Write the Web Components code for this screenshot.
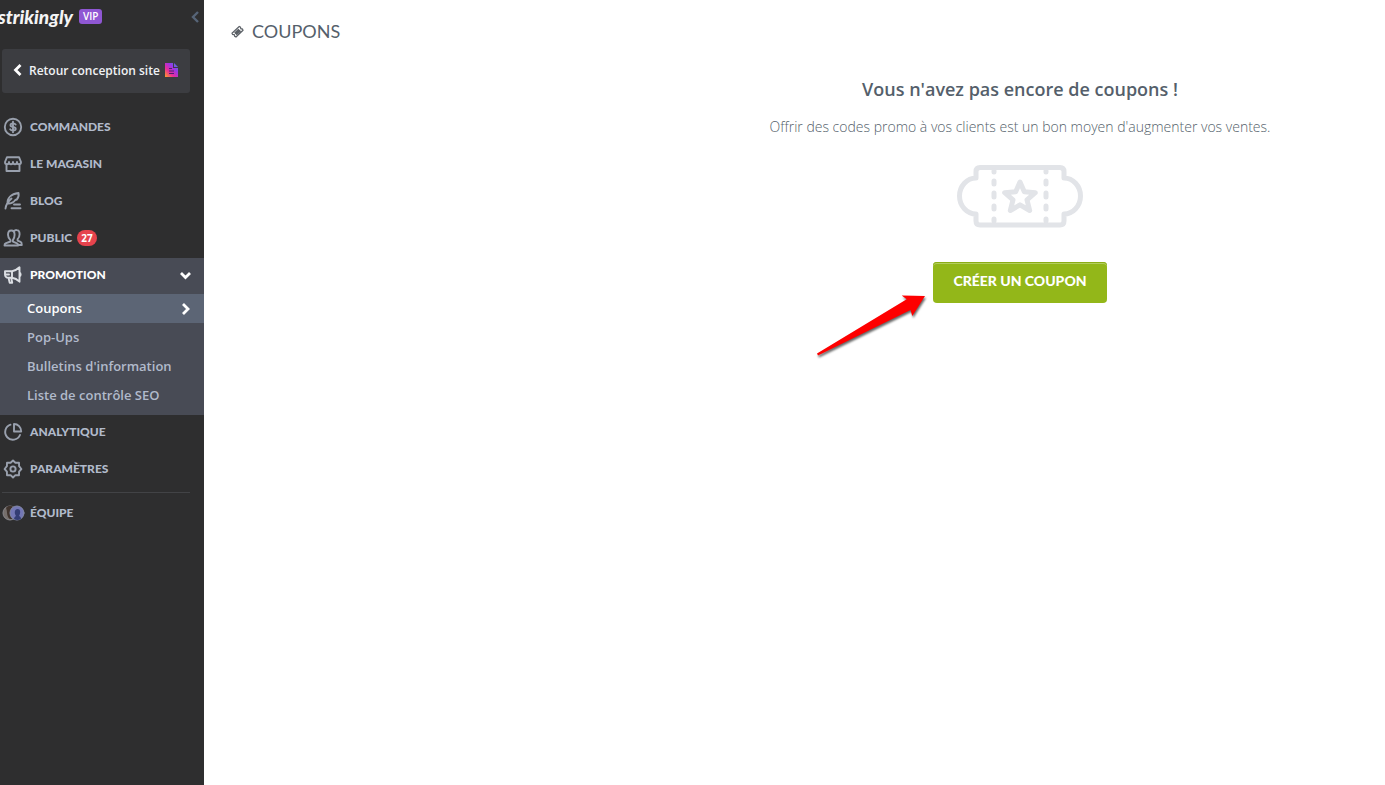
<!DOCTYPE html>
<html lang="fr">
<head>
<meta charset="utf-8">
<title>Coupons</title>
<style>
    body {
        margin: 0;
        background: #fff;
        font-family: "Open Sans", "Noto Sans", sans-serif;
        --title-font: Lato, "Open Sans", sans-serif;
        --menu-color: #b1bacb;
        --icon-color: #99a0ad;
        --text-color: #555f6b;
    }
</style>
</head>
<body>
<dashboard-layout>
    <side-bar slot="sidebar">
        <menu-item icon="orders">Commandes</menu-item>
        <menu-item icon="store">Le magasin</menu-item>
        <menu-item icon="blog">Blog</menu-item>
        <menu-item icon="audience" count="27">Public</menu-item>
        <menu-group icon="promotion" label="Promotion">
            <sub-item active>Coupons</sub-item>
            <sub-item>Pop-Ups</sub-item>
            <sub-item>Bulletins d'information</sub-item>
            <sub-item>Liste de contrôle SEO</sub-item>
        </menu-group>
        <menu-item icon="analytics">Analytique</menu-item>
        <menu-item icon="settings">Paramètres</menu-item>
        <menu-divider></menu-divider>
        <menu-item icon="team">Équipe</menu-item>
    </side-bar>
    <page-title>Coupons</page-title>
    <empty-state>
        <span slot="heading">Vous n'avez pas encore de coupons !</span>
        <span slot="text">Offrir des codes promo à vos clients est un bon moyen d'augmenter vos ventes.</span>
        <action-button slot="action">Créer un coupon</action-button>
    </empty-state>
</dashboard-layout>

<script>
const ICONS = {
    orders: `<circle cx="10" cy="10" r="8.2"/>
        <path d="M12.6 7.6c-.5-.8-1.400-1.200-2.600-1.200-1.500 0-2.500.7-2.500 1.800 0 2.500 5.200 1.100 5.200 3.600 0 1.100-1.100 1.800-2.700 1.800-1.300 0-2.300-.5-2.800-1.300M10 4.800v10.400"/>`,
    store: `<path d="M4 3.200h12l2 4.800c0 1.300-.9 2.300-2 2.300s-2-1-2-2.300c0 1.300-.9 2.300-2 2.300s-2-1-2-2.300c0 1.300-.9 2.300-2 2.300s-2-1-2-2.300c0 1.300-.9 2.300-2 2.300s-2-1-2-2.300zM3.500 10.500v6.500h13v-6.500"/>`,
    blog: `<path d="M2.500 17.500c.5-4 2.500-7 6-10M4.500 12.500C4 7 8 3 15.500 2c.6 3-.2 5-1.700 6.500l-1.500.5c-2 2.700-4.300 3.800-7.800 3.500M11 13.500h6M8.500 17.300h9"/>`,
    audience: `<path d="M7.500 12.200C5.800 10.800 5 8.900 5 6.800 5 4.200 6.200 2.500 8.300 2.500s3.300 1.700 3.300 4.300c0 2.100-.7 4-1.700 5.300v1.500l4.200 1.700c.8.300 1 1 1 2.200H1.500c0-1.300.2-1.900 1-2.200l5-1.800zM11 3.200c.7-.9 1.600-1.300 2.600-1.200 2 .1 3 1.800 3 4.200 0 2-.8 3.700-2 4.900v1.600l3 1.200c1 .4 1.200 1.300 1.200 3.100h-3.500"/>`,
    promotion: `<path d="M2 6.200h7c3-.4 5.500-2 7.500-3.900v14.400c-2-2-4.500-3.500-7.500-3.900H5.500C3.200 12.800 2 11.500 2 9.500zM9 6.200v6.600M2 9.500h4M5.500 12.800l1.200 4.900h2.500l-1-4.900M16.500 7.500c1.500.7 1.500 3.300 0 4"/>`,
    analytics: `<path d="M7.500 2.700A7.700 7.700 0 1 0 17 13M11 2v7.500h7.200C18.200 5.300 15 2 11 2z"/>`,
    settings: `<path d="M10 1.500l2.400 2.300 3.600-.1.100 3.500L18.400 10l-2.300 2.600-.1 3.600-3.600-.1L10 18.500l-2.400-2.400-3.600.1-.1-3.600L1.600 10l2.300-2.800.1-3.500 3.600.1z"/><circle cx="10" cy="10" r="2.600"/>`,
    team: `<circle cx="7" cy="10" r="7" fill="#766f6c" stroke="#88878c" stroke-width="1"/>
        <path d="M3 5c2-3 6-3 8 0v10c-3 2-5 1-6-1-1.500-3-.5-6-2-9z" fill="#40342e" stroke="none"/>
        <circle cx="14" cy="10" r="7" fill="#7377b5" stroke="#8389a6" stroke-width="1"/>
        <path d="M11 16c.5-2 1-2.500 2-3-2-3-1.500-7 1.500-7s3.500 3.500 1.500 7c1.500.5 2 1.500 2 3-2 1.300-5 1.300-7 0z" fill="#343d74" stroke="none"/>`
};

function icon(name) {
    return `<svg class="icon" viewBox="0 0 20 20" aria-hidden="true">${ICONS[name] || ''}</svg>`;
}

const ROW_STYLE = `
    a, button {
        display: flex;
        align-items: center;
        width: 100%;
        height: 36px;
        box-sizing: border-box;
        padding: 0 12px 2px 3px;
        border: 0;
        background: none;
        font: 900 12px/18px var(--title-font);
        color: var(--menu-color);
        text-transform: uppercase;
        text-decoration: none;
        text-align: left;
    }
    .icon {
        flex: none;
        width: 20px;
        height: 20px;
        margin-right: 7px;
        fill: none;
        stroke: var(--icon-color);
        stroke-width: 1.9;
        stroke-linejoin: round;
        stroke-linecap: round;
        overflow: visible;
    }
`;

class DashboardLayout extends HTMLElement {
    connectedCallback() {
        this.attachShadow({ mode: 'open' });
        this.shadowRoot.innerHTML = `
            <style>
                :host {
                    display: grid;
                    grid-template-columns: 204px 1fr;
                    min-height: 100vh;
                }
                main {
                    padding: 18px 0 0 27px;
                }
            </style>
            <slot name="sidebar"></slot>
            <main><slot></slot></main>
        `;
    }
}

class SideBar extends HTMLElement {
    connectedCallback() {
        this.attachShadow({ mode: 'open' });
        this.shadowRoot.innerHTML = `
            <style>
                :host {
                    display: block;
                    background: #2e2e2f;
                }
                header {
                    display: flex;
                    align-items: center;
                    height: 33px;
                    padding-right: 5px;
                }
                .logo {
                    margin-left: -2px;
                    color: #f4f4f5;
                    font: italic 900 19px/28px var(--title-font);
                    text-decoration: none;
                }
                .plan {
                    margin-left: 6px;
                    padding: 0 4px;
                    border-radius: 3px;
                    background: #8f57d3;
                    color: #fff;
                    font-size: 10px;
                    font-weight: 600;
                    line-height: 15px;
                }
                .collapse {
                    display: flex;
                    margin-left: auto;
                    padding: 0;
                    border: 0;
                    background: none;
                }
                .back {
                    display: flex;
                    align-items: center;
                    height: 44px;
                    box-sizing: border-box;
                    margin: 16px 14px 17px 2px;
                    padding: 0 0 2px 11px;
                    border-radius: 3px;
                    background: #3c3d41;
                    color: #f0f2f5;
                    font-size: 12px;
                    font-weight: 600;
                    text-decoration: none;
                    white-space: nowrap;
                }
                .back .arrow {
                    margin-right: 7px;
                }
                .back .doc {
                    margin-left: 5px;
                }
                nav {
                    display: flex;
                    flex-direction: column;
                }
            </style>
            <header>
                <a class="logo" href="#">strikingly</a>
                <span class="plan">VIP</span>
                <button class="collapse" type="button" aria-label="Réduire le menu">
                    <svg width="8" height="12" fill="none" stroke="#566477" stroke-width="2.400"><path d="M7 1L2 6l5 5"/></svg>
                </button>
            </header>
            <a class="back" href="#">
                <svg class="arrow" width="9" height="12" fill="none" stroke="#fff" stroke-width="2.800"><path d="M7.500 1l-5 5 5 5"/></svg>
                Retour conception site
                <svg class="doc" width="13" height="14" viewBox="0 0 13 14">
                    <defs>
                        <linearGradient id="g" x1="0" y1="1" x2="1" y2="0">
                            <stop offset="0" stop-color="#ffa21f"/>
                            <stop offset=".35" stop-color="#e82b9b"/>
                            <stop offset=".65" stop-color="#9a35e8"/>
                            <stop offset="1" stop-color="#3f8bdc"/>
                        </linearGradient>
                    </defs>
                    <path d="M0 0h8v5h5v9H0zM9 0l4 4H9z" fill="url(#g)"/>
                    <path d="M4 5.500h3M4 8h5M4 10.500h5" stroke="#4a2070" stroke-width="1.200"/>
                </svg>
            </a>
            <nav><slot></slot></nav>
        `;
    }
}

class MenuItem extends HTMLElement {
    connectedCallback() {
        const count = this.getAttribute('count');
        this.attachShadow({ mode: 'open' });
        this.shadowRoot.innerHTML = `
            <style>
                :host {
                    display: block;
                    margin-bottom: 1px;
                }
                ${ROW_STYLE}
                .count {
                    margin-left: 5px;
                    padding: 0 4px;
                    border-radius: 8px;
                    background: #e6434d;
                    color: #fff;
                    font: 700 10px/16px "Open Sans", sans-serif;
                }
            </style>
            <a href="#">${icon(this.getAttribute('icon'))}<slot></slot>${count ? `<span class="count">${count}</span>` : ''}</a>
        `;
    }
}

class MenuGroup extends HTMLElement {
    connectedCallback() {
        this.attachShadow({ mode: 'open' });
        this.shadowRoot.innerHTML = `
            <style>
                :host {
                    display: block;
                    padding-bottom: 5px;
                    background: #484b55;
                    --icon-color: #dcdfe4;
                    --menu-color: #fff;
                }
                ${ROW_STYLE}
                .chevron {
                    margin-left: auto;
                }
            </style>
            <button type="button" aria-expanded="true">
                ${icon(this.getAttribute('icon'))}${this.getAttribute('label')}
                <svg class="chevron" width="13" height="9" fill="none" stroke="#fff" stroke-width="2.800"><path d="M2 2l4.500 4.500L11 2"/></svg>
            </button>
            <slot></slot>
        `;
    }
}

class SubItem extends HTMLElement {
    connectedCallback() {
        this.attachShadow({ mode: 'open' });
        this.shadowRoot.innerHTML = `
            <style>
                :host {
                    display: block;
                }
                a {
                    display: flex;
                    align-items: center;
                    justify-content: space-between;
                    padding: 0 14px 0 27px;
                    color: #b1bacb;
                    font-size: 13px;
                    font-weight: 600;
                    line-height: 29px;
                    text-decoration: none;
                }
                svg {
                    display: none;
                }
                :host([active]) a {
                    background: #5c6575;
                    color: #fff;
                }
                :host([active]) svg {
                    display: block;
                }
            </style>
            <a href="#">
                <slot></slot>
                <svg width="9" height="12" fill="none" stroke="#fff" stroke-width="2.800"><path d="M2 1l5 5-5 5"/></svg>
            </a>
        `;
    }
}

class MenuDivider extends HTMLElement {
    connectedCallback() {
        this.attachShadow({ mode: 'open' });
        this.shadowRoot.innerHTML = `
            <style>
                :host {
                    display: block;
                    height: 1px;
                    margin: 3px 14px 3px 2px;
                    background: #424346;
                }
            </style>
        `;
    }
}

class PageTitle extends HTMLElement {
    connectedCallback() {
        this.attachShadow({ mode: 'open' });
        this.shadowRoot.innerHTML = `
            <style>
                h1 {
                    display: flex;
                    align-items: center;
                    gap: 8px;
                    margin: 0;
                    color: var(--text-color);
                    font: 400 18px/26px var(--title-font);
                    text-transform: uppercase;
                }
            </style>
            <h1>
                <svg width="13" height="13" viewBox="0 0 13 13" fill="none" stroke="#5b6066" stroke-width="1.200">
                    <path d="M1 8.200L8.200 1.500l1.300.7.300 1.500 1.700.4.500 1.200L5 12l-1.300-.6-.3-1.600-1.800-.4z"/>
                    <path d="M4 7.800l3.300-3.200 2 1.600L5.800 9.500z" fill="#5b6066"/>
                </svg>
                <slot></slot>
            </h1>
        `;
    }
}

class EmptyState extends HTMLElement {
    connectedCallback() {
        this.attachShadow({ mode: 'open' });
        this.shadowRoot.innerHTML = `
            <style>
                :host {
                    display: flex;
                    flex-direction: column;
                    align-items: center;
                    margin-left: 424px;
                    padding-top: 32px;
                    color: var(--text-color);
                    text-align: center;
                }
                h2 {
                    margin: 0;
                    font-size: 18px;
                    font-weight: 600;
                    line-height: 26px;
                }
                p {
                    margin: 15px 0 27px;
                    font-size: 14px;
                    font-weight: 300;
                    line-height: 20px;
                }
                .ticket {
                    margin-bottom: 34px;
                }
            </style>
            <h2><slot name="heading"></slot></h2>
            <p><slot name="text"></slot></p>
            <svg class="ticket" width="128" height="64" viewBox="0 0 128 64" fill="none" stroke="#e2e4e8" stroke-width="5" stroke-linejoin="round" stroke-linecap="round" aria-hidden="true">
                <path d="M24 3.500h80q4 0 4 4v6.500c9 0 16.500 8 16.500 18s-7.500 18-16.500 18v7q0 4-4 4H24q-4 0-4-4V50C11 50 3.500 42 3.500 32S11 14 20 14V7.500q0-4 4-4z"/>
                <path d="M38 7v1M38 17v3M38 29v4M38 42v3M38 55v2M90 7v1M90 17v3M90 29v4M90 42v3M90 55v2"/>
                <path d="M64 18l4.300 9.700 11 1-8.300 7.200 2.700 10.600-9.700-5.600-9.700 5.600L57 35.900l-8.300-7.200 11-1z"/>
            </svg>
            <slot name="action"></slot>
        `;
    }
}

class ActionButton extends HTMLElement {
    connectedCallback() {
        this.attachShadow({ mode: 'open' });
        this.shadowRoot.innerHTML = `
            <style>
                :host {
                    display: block;
                    position: relative;
                }
                button {
                    display: block;
                    min-width: 174px;
                    height: 41px;
                    padding: 0 18px 3px;
                    border: 0;
                    border-radius: 4px;
                    background: #93b719;
                    box-shadow: inset 0 1px #8bad17, inset 0 2px #b3cd5e;
                    color: #fff;
                    font: 900 14px/20px var(--title-font);
                    text-transform: uppercase;
                    white-space: nowrap;
                }
                .pointer {
                    position: absolute;
                    top: 30px;
                    right: 182px;
                    overflow: visible;
                    filter: drop-shadow(1px 2px 1px rgba(0, 0, 0, 0.6));
                }
            </style>
            <button type="button"><slot></slot></button>
            <svg class="pointer" width="108" height="66" viewBox="0 0 108 66" fill="#fe0000" aria-hidden="true">
                <path d="M0 61.500L89.700 7.300l-5-3.800 23.300.5-12.700 20-1.800-6L1 63.500z"/>
            </svg>
        `;
    }
}

customElements.define('dashboard-layout', DashboardLayout);
customElements.define('side-bar', SideBar);
customElements.define('menu-item', MenuItem);
customElements.define('menu-group', MenuGroup);
customElements.define('sub-item', SubItem);
customElements.define('menu-divider', MenuDivider);
customElements.define('page-title', PageTitle);
customElements.define('empty-state', EmptyState);
customElements.define('action-button', ActionButton);
</script>
</body>
</html>
